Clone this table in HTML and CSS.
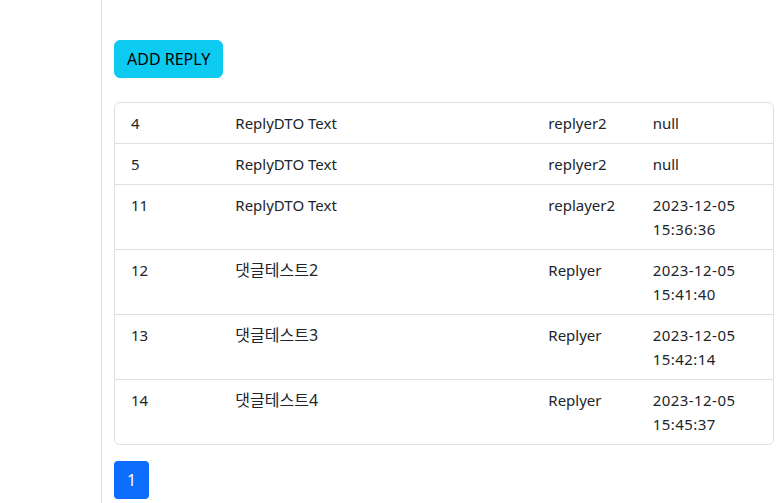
FILE: index.html
```html
<!DOCTYPE html>
<html lang="ko">
<head>
<meta charset="utf-8">
<link rel="stylesheet" href="styles.css">
</head>
<body>
<div class="layout">
  <aside class="sidebar"></aside>
  <main class="main">
    <button class="btn-reply">ADD REPLY</button>
    <ul class="list">
      <li class="item"><span>4</span><span>ReplyDTO Text</span><span>replyer2</span><span>null</span></li>
      <li class="item"><span>5</span><span>ReplyDTO Text</span><span>replyer2</span><span>null</span></li>
      <li class="item"><span>11</span><span>ReplyDTO Text</span><span>replayer2</span><span class="date">2023-12-05 15:36:36</span></li>
      <li class="item"><span>12</span><span class="ko">댓글테스트2</span><span>Replyer</span><span class="date">2023-12-05 15:41:40</span></li>
      <li class="item"><span>13</span><span class="ko">댓글테스트3</span><span>Replyer</span><span class="date">2023-12-05 15:42:14</span></li>
      <li class="item"><span>14</span><span class="ko">댓글테스트4</span><span>Replyer</span><span class="date">2023-12-05 15:45:37</span></li>
    </ul>
    <nav class="pager"><a class="page active">1</a></nav>
  </main>
</div>
</body>
</html>
```
FILE: styles.css
```css
* { box-sizing: border-box; }
body {
  margin: 0;
  font-family: "Noto Sans", "Noto Sans CJK KR", sans-serif;
  font-size: 16px;
  line-height: 24px;
  color: #212529;
  background: #fff;
}
.layout { display: flex; min-height: 503px; }
.sidebar {
  width: 102px;
  flex: none;
  border-right: 1px solid #dee2e6;
}
.main {
  flex: 1;
  padding: 40px 5px 0 12px;
}
.btn-reply {
  display: block;
  height: 38px;
  padding: 6px 12px;
  background: #0dcaf0;
  border: 1px solid #0dcaf0;
  border-radius: 6px;
  color: #000;
  font: inherit;
  font-size: 16px;
}
.list {
  list-style: none;
  margin: 24px 0 16px;
  padding: 0;
  border: 1px solid #dfdfdf;
  border-radius: 6px;
}
.item {
  display: grid;
  grid-template-columns: 2fr 6fr 2fr 2fr;
  padding: 8px 16px;
  border-top: 1px solid #dfdfdf;
  font-size: 15px;
}
.item:first-child { border-top: none; }
.item span { overflow-wrap: break-word; }
.item .ko { font-size: 16px; }
.item .date { letter-spacing: 0.45px; }
.pager { display: flex; }
.page {
  display: block;
  width: 35px;
  height: 38px;
  line-height: 38px;
  text-align: center;
  background: #0d6efd;
  color: #fff;
  border-radius: 4px;
}
```
